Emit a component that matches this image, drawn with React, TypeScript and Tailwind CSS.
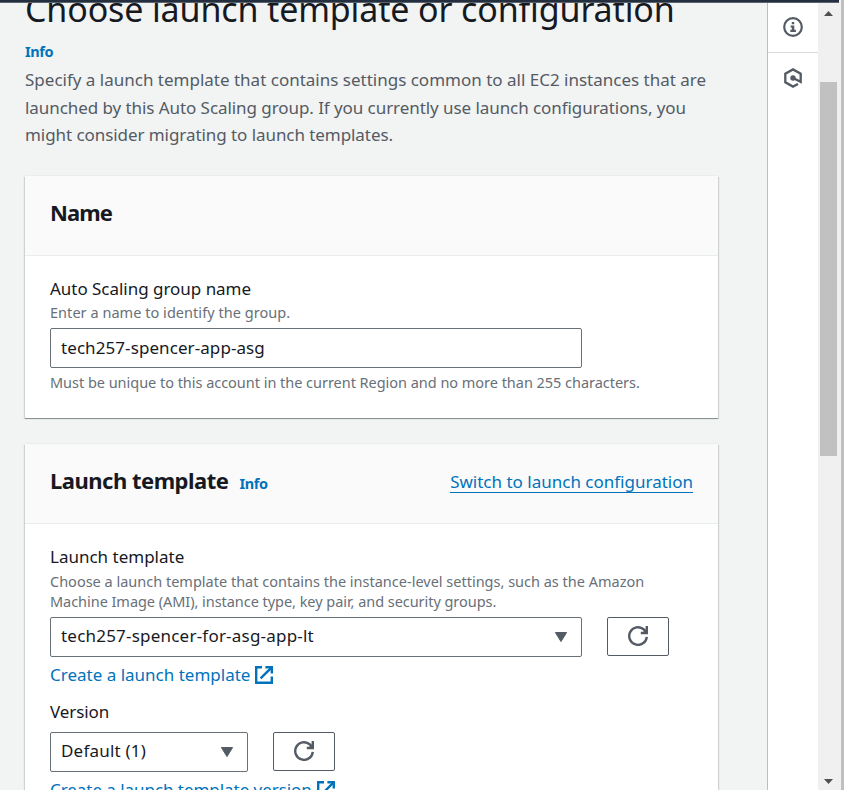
import type { ReactNode } from "react";

function RefreshButton() {
  return (
    <button className="flex h-[39px] w-[62px] shrink-0 items-center justify-center rounded-[2px] border border-[#545b64] bg-white pb-[1px]">
      <svg width="20" height="20" viewBox="0 0 20 20" fill="none" stroke="#545b64" strokeWidth="2.4">
        <path d="M18.8 10.8A8.8 8.8 0 1 1 15.6 3.2L17.6 5.2" />
        <path d="M12.8 7H18.8V0" />
        <path d="M15.5 4.6L18.8 3.4V7H15.5Z" fill="#545b64" stroke="none" />
      </svg>
    </button>
  );
}

function ExternalIcon() {
  return (
    <svg width="18" height="18" viewBox="0 0 18 18" fill="none" stroke="#0073bb" strokeWidth="2.4" className="ml-[5px] shrink-0">
      <path d="M7 1.2H1.2V16.8H16.8V10.4" />
      <path d="M10.4 1.2H16.8V7.4" />
      <path d="M16.4 1.6L5.6 12.4" />
    </svg>
  );
}

function Select({ children, className }: { children: ReactNode; className: string }) {
  return (
    <div className={"flex h-10 items-center justify-between rounded-[2px] border border-[#687078] bg-white pr-[13px] pl-[10px] text-[17px] text-[#16191f] " + className}>
      {children}
      <svg width="14" height="12" viewBox="0 0 14 12" fill="#545b64" stroke="#545b64" strokeLinejoin="round">
        <path d="M1.4 1.5H12.6L7 10.6Z" />
      </svg>
    </div>
  );
}

function Card({ header, children }: { header: ReactNode; children: ReactNode }) {
  return (
    <section className="w-[693px] bg-white shadow-[0_1px_0_0_#879596,0_-1px_0_0_#eaeded,1px_1px_1px_0_rgba(0,28,36,0.15),-1px_1px_1px_0_rgba(0,28,36,0.15)]">
      <div className="flex h-20 items-start justify-between border-b border-[#eaeded] bg-[#fafafa] px-[25px] pt-[22px]">{header}</div>
      <div className="px-[25px] pt-[21px]">{children}</div>
    </section>
  );
}

export default function App() {
  return (
    <div className="flex h-[790px] w-[844px] overflow-hidden bg-[#f0f0f0] font-['Noto_Sans',sans-serif] whitespace-nowrap">
      <div className="flex h-full w-[840px] shrink-0 flex-col">
        <div className="h-[3px] w-[839px] shrink-0 border-b border-[#5a636e] bg-[#232f3e]" />
        <div className="flex min-h-0 flex-1">
          <main className="h-[787px] w-[767px] shrink-0 overflow-hidden bg-[#f2f3f3] pl-[25px]">
            <h1 className="mt-[-16px] text-[34px] leading-[44px] tracking-[-0.14px] text-[#16191f]">Choose launch template or configuration</h1>
            <div className="mt-[6px] text-[14.5px] leading-7 font-bold tracking-[-0.4px] text-[#0073bb]">Info</div>
            <div className="mt-[1px] text-[17px] leading-[28px] text-[#545b64]">
              <p>Specify a launch template that contains settings common to all EC2 instances that are</p>
              <p className="tracking-[-0.066px]">launched by this Auto Scaling group. If you currently use launch configurations, you</p>
              <p className="leading-[26px] tracking-[-0.065px]">might consider migrating to launch templates.</p>
            </div>

            <div className="mt-[28px] flex flex-col gap-[26px]">
              <Card header={<h2 className="text-[22px] leading-7 font-bold tracking-[-0.95px] text-[#16191f]">Name</h2>}>
                <div className="text-[17px] leading-[23px] tracking-[-0.03px] text-[#16191f]">Auto Scaling group name</div>
                <div className="mt-[2px] text-[14.5px] leading-5 tracking-[0.04px] text-[#687078]">Enter a name to identify the group.</div>
                <div className="mt-[6px] flex h-10 w-[532px] items-center rounded-[2px] border border-[#687078] bg-white pl-[10px] text-[17px] tracking-[0.08px] text-[#16191f]">
                  tech257-spencer-app-asg
                </div>
                <div className="mt-[4px] pb-[26px] text-[14.5px] leading-5 tracking-[-0.03px] text-[#687078]">
                  Must be unique to this account in the current Region and no more than 255 characters.
                </div>
              </Card>

              <Card
                header={
                  <>
                    <div className="flex items-baseline gap-[11px]">
                      <h2 className="text-[22px] leading-7 font-bold tracking-[-0.5px] text-[#16191f]">Launch template</h2>
                      <span className="text-[14.5px] leading-5 font-bold tracking-[-0.4px] text-[#0073bb]">Info</span>
                    </div>
                    <a className="mt-[5px] border-b border-[#0073bb] text-[17px] leading-[21px] text-[#0073bb]">Switch to launch configuration</a>
                  </>
                }
              >
                <div className="text-[17px] leading-[23px] text-[#16191f]">Launch template</div>
                <div className="mt-[3px] text-[14.5px] leading-5 text-[#687078]">
                  <p>Choose a launch template that contains the instance-level settings, such as the Amazon</p>
                  <p className="tracking-[-0.045px]">Machine Image (AMI), instance type, key pair, and security groups.</p>
                </div>
                <div className="mt-[6px] flex gap-[25px]">
                  <Select className="w-[532px]"><span className="pb-[3px] tracking-[0.21px]">tech257-spencer-for-asg-app-lt</span></Select>
                  <RefreshButton />
                </div>
                <div className="mt-[6px] flex h-6 items-center text-[17px] text-[#0073bb]">
                  <span className="pb-[1px]">Create a launch template</span>
                  <ExternalIcon />
                </div>
                <div className="mt-[13px] text-[17px] leading-[23px] tracking-[-0.1px] text-[#16191f]">Version</div>
                <div className="mt-[9px] flex gap-[25px]">
                  <Select className="w-[198px]"><span className="pb-[3px] tracking-[0.2px]">Default (1)</span></Select>
                  <RefreshButton />
                </div>
                <div className="mt-[6px] flex h-6 items-center text-[17px] text-[#0073bb]">
                  <span className="pb-[1px] tracking-[-0.05px]">Create a launch template version</span>
                  <ExternalIcon />
                </div>
              </Card>
            </div>
          </main>

          <aside className="w-[51px] shrink-0 border-l border-[#b8bfbf] bg-white">
            <div className="flex h-[50px] items-center justify-center border-b border-[#d5dbdb] pb-[1px]">
              <svg width="20" height="20" viewBox="0 0 20 20" fill="none" stroke="#545b64" strokeWidth="2.2">
                <circle cx="10" cy="10" r="8.8" />
                <path d="M8.8 5H11.2V7.2H8.8ZM7.6 8.4H11.3V12.8H12.9V14.9H7.3V12.8H8.8V10.4H7.6Z" fill="#545b64" stroke="none" />
              </svg>
            </div>
            <div className="flex h-[50px] items-center justify-center">
              <svg width="20" height="20" viewBox="0 0 20 20" fill="none" stroke="#545b64" strokeWidth="2.3">
                <path d="M15 15.9L10 18.6L2.3 14.3V5.7L10 1.4L17.7 5.7V13.9L10 10" />
                <circle cx="10" cy="10" r="2.7" fill="#545b64" stroke="none" />
              </svg>
            </div>
          </aside>

          <div className="flex w-[22px] shrink-0 flex-col bg-[#f0f0f0] pl-[2px]">
            <svg width="17" height="14" viewBox="0 0 17 14" fill="#505050" className="shrink-0">
              <path d="M8.5 8L13 13H4Z" />
            </svg>
            <div className="mt-[65px] h-[374px] w-[17px] shrink-0 bg-[#c1c1c1]" />
            <svg width="17" height="11" viewBox="0 0 17 11" fill="#505050" className="mt-auto mb-[3px] shrink-0">
              <path d="M8.5 8L13 3H4Z" />
            </svg>
          </div>
        </div>
      </div>
      <div className="ml-[1px] w-[3px] bg-[#c0c0c0]" />
    </div>
  );
}
